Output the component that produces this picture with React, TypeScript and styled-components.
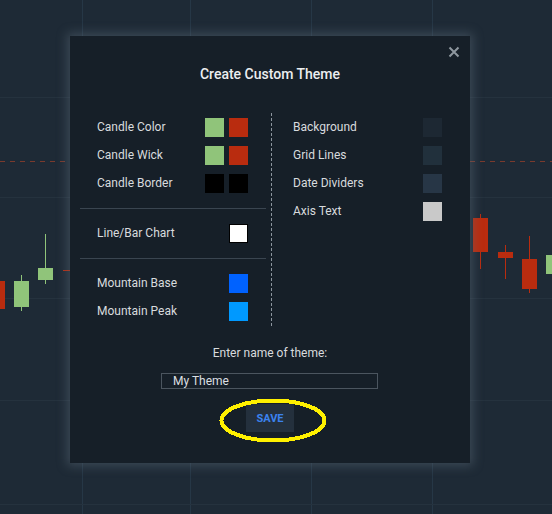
import React from "react";
import styled, { createGlobalStyle } from "styled-components";

const GlobalStyle = createGlobalStyle`
  html, body {
    margin: 0;
    padding: 0;
    background: #1e2a36;
    overflow: hidden;
  }
  * { box-sizing: border-box; }
`;

const Screen = styled.div`
  position: relative;
  width: 552px;
  height: 514px;
  overflow: hidden;
  font-family: Roboto, "Liberation Sans", sans-serif;
`;

const Chart = styled.svg`
  display: block;
`;

const Overlay = styled.div`
  position: absolute;
  inset: 0;
  display: flex;
  align-items: flex-start;
  justify-content: flex-start;
  padding: 36px 0 0 70px;
`;

const Modal = styled.div`
  position: relative;
  width: 400px;
  background: #161f28;
  box-shadow: 0 0 10px 3px rgba(95, 110, 125, 0.45);
  padding: 28px 10px 31px;
  display: flex;
  flex-direction: column;
  align-items: stretch;
`;

const CloseButton = styled.button`
  position: absolute;
  top: 10px;
  right: 10px;
  width: 12px;
  height: 12px;
  padding: 0;
  border: 0;
  background: none;
  display: flex;
  cursor: pointer;
`;

const Title = styled.h2`
  margin: 0 0 29px;
  font-size: 14px;
  line-height: 20px;
  font-weight: 500;
  color: #eceef0;
  text-align: center;
`;

const Columns = styled.div`
  display: flex;
  align-items: stretch;
`;

const LeftColumn = styled.div`
  width: 186px;
  display: flex;
  flex-direction: column;
`;

const Separator = styled.div`
  width: 1px;
  margin: 0 0 0 5px;
  height: 214px;
  background-image: linear-gradient(to bottom, #8d969f 60%, transparent 60%);
  background-size: 1px 5px;
`;

const RightColumn = styled.div`
  width: 188px;
  display: flex;
  flex-direction: column;
  padding: 0 18px 0 21px;
`;

const Group = styled.div<{ $first?: boolean; $last?: boolean }>`
  display: flex;
  flex-direction: column;
  padding: ${(p) => (p.$first ? "0" : "10px")} 18px ${(p) => (p.$last ? "0" : "11px")} 17px;
  border-bottom: ${(p) => (p.$last ? "none" : "1px solid #3a4550")};
`;

const Row = styled.div`
  height: 28px;
  display: flex;
  align-items: center;
  justify-content: space-between;
`;

const Label = styled.span`
  font-size: 12px;
  color: #d8dbde;
`;

const Swatches = styled.div`
  display: flex;
  gap: 5px;
`;

const Swatch = styled.span<{ $color: string; $outlined?: boolean }>`
  width: 19px;
  height: 19px;
  background: ${(p) => p.$color};
  border: ${(p) => (p.$outlined ? "1px solid #000" : "none")};
`;

const NameSection = styled.div`
  margin-top: 18px;
  display: flex;
  flex-direction: column;
  align-items: center;
`;

const NameLabel = styled.label`
  font-size: 12px;
  line-height: 16px;
  color: #d8dbde;
`;

const NameInput = styled.input`
  margin: 12px 1px 0 0;
  width: 217px;
  height: 16px;
  padding: 0 0 0 11px;
  border: 1px solid #4b555f;
  background: transparent;
  color: #dcdfe2;
  font-family: Roboto, "Liberation Sans", sans-serif;
  font-size: 12px;
  line-height: 14px;
  outline: none;
`;

const SaveWrap = styled.div`
  position: relative;
  margin-top: 15px;
  display: flex;
`;

const SaveButton = styled.button`
  width: 48px;
  height: 28px;
  border: 0;
  padding: 0;
  background: #24303d;
  color: #3b82ef;
  font-family: Roboto, "Liberation Sans", sans-serif;
  font-size: 11px;
  font-weight: 700;
  cursor: pointer;
`;

const Ring = styled.svg`
  position: absolute;
  left: -27px;
  top: -6px;
  pointer-events: none;
`;

const GREEN = "#90c47a";
const RED = "#b92c0f";

type Candle = { x: number; wickTop: number; wickBottom: number; top: number; h: number; w?: number; color: string };

const candles: Candle[] = [
  { x: 14, wickTop: 275, wickBottom: 311, top: 281, h: 26, color: GREEN },
  { x: 38, wickTop: 234, wickBottom: 284, top: 268, h: 12, color: GREEN },
  { x: 473, wickTop: 214, wickBottom: 269, top: 218, h: 34, color: RED },
  { x: 498, wickTop: 245, wickBottom: 279, top: 252, h: 6, color: RED },
  { x: 522, wickTop: 236, wickBottom: 293, top: 259, h: 30, color: RED },
];

const vLines = [82, 190, 311, 432];
const hLines = [97, 197, 298, 400, 504];

function PriceChart() {
  return (
    <Chart width={552} height={514} viewBox="0 0 552 514">
      <rect width={552} height={514} fill="#1e2a36" />
      {vLines.map((x) => (
        <rect key={`v${x}`} x={x} y={0} width={1} height={514} fill="#263746" />
      ))}
      {hLines.map((y) => (
        <rect key={`h${y}`} x={0} y={y} width={552} height={1} fill="#25323e" />
      ))}
      <line x1={0} y1={161.5} x2={552} y2={161.5} stroke="#7a3a2d" strokeWidth={1} strokeDasharray="5 5" />
      <rect x={0} y={281} width={5} height={28} fill={RED} />
      {candles.map((c) => (
        <g key={c.x}>
          <rect x={c.x + 7} y={c.wickTop} width={1} height={c.wickBottom - c.wickTop} fill={c.color} />
          <rect x={c.x} y={c.top} width={c.w ?? 15} height={c.h} fill={c.color} />
        </g>
      ))}
      <rect x={63} y={270} width={7} height={1} fill={RED} />
      <rect x={546} y={255} width={6} height={19} fill={GREEN} />
    </Chart>
  );
}

type Setting = { label: string; colors: string[]; outlined?: boolean };

const candleSettings: Setting[] = [
  { label: "Candle Color", colors: [GREEN, RED] },
  { label: "Candle Wick", colors: [GREEN, RED] },
  { label: "Candle Border", colors: ["#000000", "#000000"] },
];

const mountainSettings: Setting[] = [
  { label: "Mountain Base", colors: ["#0062ff"] },
  { label: "Mountain Peak", colors: ["#0099ff"] },
];

const chartSettings: Setting[] = [
  { label: "Background", colors: ["#1d2833"] },
  { label: "Grid Lines", colors: ["#21303c"] },
  { label: "Date Dividers", colors: ["#273646"] },
  { label: "Axis Text", colors: ["#c9c9c9"] },
];

function SettingRow({ label, colors, outlined }: Setting) {
  return (
    <Row>
      <Label>{label}</Label>
      <Swatches>
        {colors.map((c, i) => (
          <Swatch key={i} $color={c} $outlined={outlined} />
        ))}
      </Swatches>
    </Row>
  );
}

export default function App() {
  return (
    <>
      <GlobalStyle />
      <Screen>
        <PriceChart />
        <Overlay>
          <Modal>
            <CloseButton aria-label="Close">
              <svg width={12} height={12} viewBox="0 0 12 12">
                <path d="M1.5 1.5 L10.5 10.5 M10.5 1.5 L1.5 10.5" stroke="#8e979f" strokeWidth={2} />
              </svg>
            </CloseButton>
            <Title>Create Custom Theme</Title>
            <Columns>
              <LeftColumn>
                <Group $first>
                  {candleSettings.map((s) => (
                    <SettingRow key={s.label} {...s} />
                  ))}
                </Group>
                <Group>
                  <SettingRow label="Line/Bar Chart" colors={["#ffffff"]} outlined />
                </Group>
                <Group $last>
                  {mountainSettings.map((s) => (
                    <SettingRow key={s.label} {...s} />
                  ))}
                </Group>
              </LeftColumn>
              <Separator />
              <RightColumn>
                {chartSettings.map((s) => (
                  <SettingRow key={s.label} {...s} />
                ))}
              </RightColumn>
            </Columns>
            <NameSection>
              <NameLabel htmlFor="theme-name">Enter name of theme:</NameLabel>
              <NameInput id="theme-name" defaultValue="My Theme" />
              <SaveWrap>
                <SaveButton>SAVE</SaveButton>
                <Ring width={108} height={45} viewBox="0 0 108 45" shapeRendering="crispEdges">
                  <ellipse cx={54} cy={22.5} rx={51.5} ry={20} fill="none" stroke="#fff000" strokeWidth={4} />
                </Ring>
              </SaveWrap>
            </NameSection>
          </Modal>
        </Overlay>
      </Screen>
    </>
  );
}
